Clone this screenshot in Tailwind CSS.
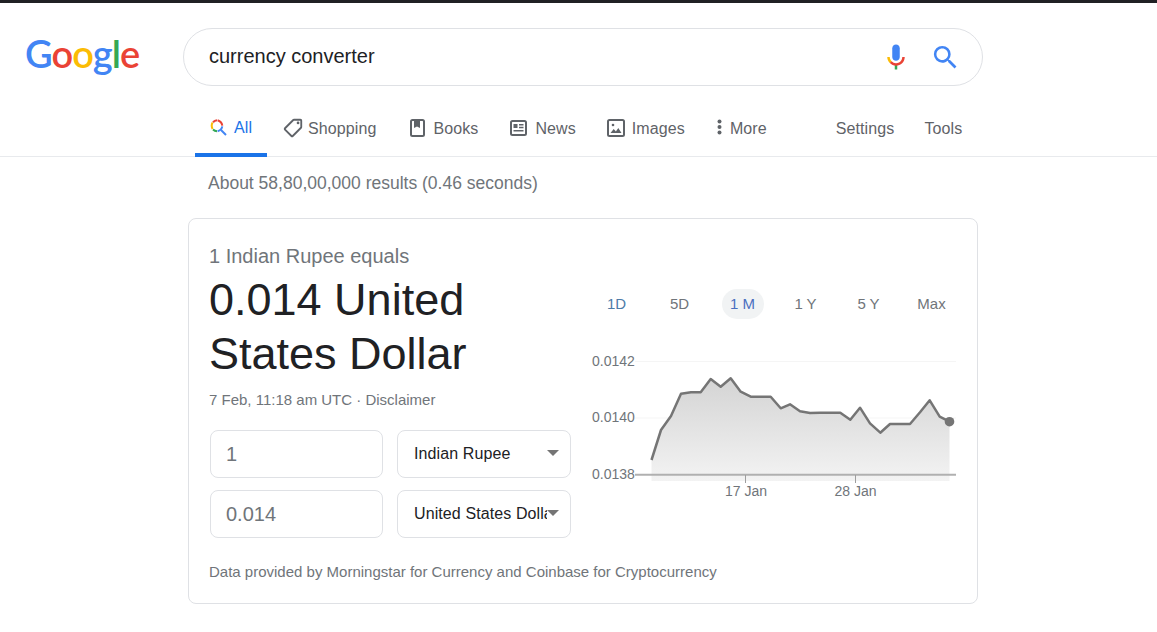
<!DOCTYPE html>
<html lang="en">
<head>
    <meta charset="UTF-8">
    <title>currency converter - Google Search</title>
    <script src="https://cdn.jsdelivr.net/npm/@tailwindcss/browser@4"></script>
</head>
<body class="bg-white font-['Liberation_Sans',Arial,sans-serif] overflow-hidden">
<div class="h-[632px] w-[1157px] overflow-hidden">

    <!-- Top edge -->
    <div class="h-[3px] bg-[#202124]"></div>

    <!-- Search header -->
    <header class="flex items-start h-[99px] pt-[25px]">
        <div class="w-[183px] pl-[25px] text-[38px] leading-[50px] tracking-[-1px] font-semibold font-['Lato',sans-serif]">
            <span class="text-[#4285f4]">G</span><span class="text-[#ea4335]">o</span><span class="text-[#fbbc05]">o</span><span class="text-[#4285f4]">g</span><span class="text-[#34a853]">l</span><span class="text-[#ea4335]">e</span>
        </div>
        <div class="flex items-center w-[800px] h-[58px] rounded-full border border-[#dfe1e5] pl-[25px] pr-[21px]">
            <div class="flex-1 pb-[2px] text-[20px] text-[#202124]">currency converter</div>
            <svg class="w-[30px] h-[30px] mr-[19px]" viewBox="0 0 24 24">
                <path fill="#4285f4" d="m12 15c1.66 0 3-1.31 3-2.97v-7.02c0-1.66-1.34-3.01-3-3.01s-3 1.34-3 3.01v7.02c0 1.66 1.34 2.97 3 2.97z"/>
                <path fill="#34a853" d="m11 18.08h2v3.92h-2z"/>
                <path fill="#fbbc05" d="m7.05 16.87c-1.27-1.33-2.05-2.83-2.05-4.87h2c0 1.45 0.56 2.42 1.47 3.38v0.32l-1.15 1.18z"/>
                <path fill="#ea4335" d="m12 16.93a4.97 5.25 0 0 1 -3.54 -1.55l-1.41 1.49c1.26 1.34 3.02 2.13 4.95 2.13 3.87 0 6.99-2.92 6.99-6.99h-1.99c0 2.92-2.24 4.92-4.99 4.92z"/>
            </svg>
            <svg class="w-[31px] h-[31px]" viewBox="0 0 24 24">
                <path fill="#4285f4" d="M15.5 14h-.79l-.28-.27A6.471 6.471 0 0 0 16 9.5 6.5 6.5 0 1 0 9.5 16c1.61 0 3.09-.59 4.23-1.57l.27.28v.79l5 4.99L20.49 19l-4.99-5zm-6 0C7.01 14 5 11.99 5 9.5S7.01 5 9.5 5 14 7.01 14 9.5 11.99 14 9.5 14z"/>
            </svg>
        </div>
    </header>

    <!-- Tabs -->
    <nav class="flex items-stretch h-[55px] pl-[195px] border-b border-[#e8eaed] text-[16px] tracking-[0.1px] text-[#5f6368]">
        <div class="flex items-center w-[72px] pl-[15px] border-b-4 border-[#1a73e8] text-[#1a73e8] h-[55px]">
            <svg class="w-[17px] h-[17px] mr-[7px]" viewBox="0 0 17 17" fill="none" stroke-width="2">
                <path stroke="#ea4335" d="M3 3.2A6.5 6.5 0 0 1 7 1.2"/>
                <path stroke="#fbbc05" d="M2.6 3.6A6.5 6.5 0 0 0 2.6 10"/>
                <path stroke="#34a853" d="M3 10.6A6.5 6.5 0 0 0 7 12.3"/>
                <path stroke="#4285f4" d="M7.6 12.3A6.5 6.5 0 0 0 12.3 7.4"/>
                <path stroke="#ea4335" d="M7.6 1.2A6.5 6.5 0 0 1 12.3 6.6"/>
                <path stroke="#4285f4" d="M11 11l5 5"/>
            </svg>
            <span>All</span>
        </div>
        <div class="flex items-center ml-[15px]">
            <svg class="w-[22px] h-[22px] mr-[4px] mb-[2px]" viewBox="0 0 24 24" fill="#5f6368">
                <g transform="matrix(-1 0 0 1 24 0)">
                    <path d="M21.41 11.58l-9-9C12.05 2.22 11.55 2 11 2H4c-1.1 0-2 .9-2 2v7c0 .55.22 1.05.59 1.42l9 9c.36.36.86.58 1.41.58s1.05-.22 1.41-.59l7-7c.37-.36.59-.86.59-1.41s-.23-1.06-.59-1.42zM13 20.01L4 11V4h7v-.01l9 9-7 7.02z"/>
                    <circle cx="6.5" cy="6.5" r="1.5"/>
                </g>
            </svg>
            <span>Shopping</span>
        </div>
        <div class="flex items-center ml-[34px]">
            <svg class="w-[15px] h-[18px] mr-[8px] mb-[2px]" viewBox="0 0 15 18" fill="none">
                <rect x="1" y="1" width="13" height="16" rx="1.5" stroke="#5f6368" stroke-width="2"/>
                <path fill="#5f6368" d="M4 1h6v8L7 7.5 4 9z"/>
            </svg>
            <span>Books</span>
        </div>
        <div class="flex items-center ml-[32px]">
            <svg class="w-[17px] h-[16px] mr-[8px] mb-[2px]" viewBox="0 0 17 16" fill="none">
                <rect x="1" y="1" width="15" height="14" rx="1.5" stroke="#5f6368" stroke-width="2"/>
                <path fill="#5f6368" d="M3.5 4h4v4h-4zM9 4h4.500v1.500H9zM9 6.700h4.500v1.500H9zM3.500 10h10v1.500h-10z"/>
            </svg>
            <span>News</span>
        </div>
        <div class="flex items-center ml-[31px]">
            <svg class="w-[18px] h-[18px] mr-[7px] mb-[2px]" viewBox="0 0 18 18" fill="none">
                <rect x="1" y="1" width="16" height="16" rx="1.500" stroke="#5f6368" stroke-width="2"/>
                <circle cx="6" cy="6" r="1.300" fill="#5f6368"/>
                <path fill="#5f6368" d="M3.500 14l3.200-4 2.200 2.500 2.400-3.500 3.200 5z"/>
            </svg>
            <span>Images</span>
        </div>
        <div class="flex items-center ml-[32px]">
            <svg class="w-[5px] h-[16px] mr-[8px] mb-[4px]" viewBox="0 0 5 16" fill="#5f6368">
                <circle cx="2.500" cy="2.500" r="2"/>
                <circle cx="2.500" cy="8" r="2"/>
                <circle cx="2.500" cy="13.500" r="2"/>
            </svg>
            <span>More</span>
        </div>
        <div class="flex items-center ml-[69px]">Settings</div>
        <div class="flex items-center ml-[30px]">Tools</div>
    </nav>

    <!-- Result count -->
    <div class="pl-[208px] pt-[16px] h-[61px] text-[17.5px] leading-[20px] text-[#70757a]">About 58,80,00,000 results (0.46 seconds)</div>

    <!-- Converter card -->
    <section class="flex ml-[188px] w-[790px] h-[386px] rounded-lg border border-[#dfe1e5]">
        <div class="w-[390px] pl-[20px] pt-[25px] shrink-0">
            <div class="text-[20px] leading-[24px] text-[#70757a]">1 Indian Rupee equals</div>
            <div class="mt-[5px] text-[45px] leading-[54px] text-[#202124]">0.014 United<br>States Dollar</div>
            <div class="mt-[10px] text-[15px] leading-[18px] text-[#70757a]">7 Feb, 11:18 am UTC · Disclaimer</div>
            <div class="mt-[21px] grid grid-cols-[173px_174px] gap-x-[14px] gap-y-[12px] pl-[1px]">
                <div class="flex items-center h-[48px] pl-[15px] rounded-lg border border-[#dfe1e5] text-[20px] text-[#70757a]">1</div>
                <div class="relative flex items-center h-[48px] pl-[16px] rounded-lg border border-[#dfe1e5] text-[16px] tracking-[0.1px] text-[#202124]">
                    <span class="w-[133px] overflow-hidden whitespace-nowrap">Indian Rupee</span>
                    <span class="absolute right-[11px] top-[19px] w-0 h-0 border-x-[6.500px] border-x-transparent border-t-[6px] border-t-[#757575]"></span>
                </div>
                <div class="flex items-center h-[48px] pl-[15px] rounded-lg border border-[#dfe1e5] text-[20px] text-[#70757a]">0.014</div>
                <div class="relative flex items-center h-[48px] pl-[16px] rounded-lg border border-[#dfe1e5] text-[16px] tracking-[0.1px] text-[#202124]">
                    <span class="w-[133px] overflow-hidden whitespace-nowrap">United States Dollar</span>
                    <span class="absolute right-[11px] top-[19px] w-0 h-0 border-x-[6.500px] border-x-transparent border-t-[6px] border-t-[#757575]"></span>
                </div>
            </div>
            <div class="mt-[25px] text-[15px] leading-[18px] text-[#70757a] whitespace-nowrap">Data provided by Morningstar for Currency and Coinbase for Cryptocurrency</div>
        </div>

        <!-- Chart side -->
        <div class="flex-1 pt-[70px] pl-[6px]">
            <div class="flex w-[378px] text-[15px] text-[#70757a]">
                <div class="flex-1 flex justify-center"><span class="px-[10px] h-[30px] leading-[30px] text-[#4d7ba8]">1D</span></div>
                <div class="flex-1 flex justify-center"><span class="px-[10px] h-[30px] leading-[30px]">5D</span></div>
                <div class="flex-1 flex justify-center"><span class="w-[42px] text-center h-[30px] leading-[30px] rounded-full bg-[#f1f3f4] text-[#4a6fc0]">1 M</span></div>
                <div class="flex-1 flex justify-center"><span class="px-[10px] h-[30px] leading-[30px]">1 Y</span></div>
                <div class="flex-1 flex justify-center"><span class="px-[10px] h-[30px] leading-[30px]">5 Y</span></div>
                <div class="flex-1 flex justify-center"><span class="px-[10px] h-[30px] leading-[30px]">Max</span></div>
            </div>
            <svg class="block mt-[31px] ml-[5px] w-[376px] h-[150px] font-['Liberation_Sans',Arial,sans-serif]" viewBox="590 350 376 150">
                <defs>
                    <linearGradient id="area" x1="0" y1="0" x2="0" y2="1">
                        <stop offset="0" stop-color="#d4d4d4"/>
                        <stop offset="1" stop-color="#f3f3f3"/>
                    </linearGradient>
                </defs>
                <path d="M635 361.500H956M635 418H956" stroke="#f5f5f5" stroke-width="1"/>
                <path fill="url(#area)" d="M651.500 460L661 430L671 416L681 393.700L691 392.300L700.700 392.300L710.700 379L720.700 386.700L730.700 378.300L740.700 391.700L750.700 396.700L760.700 396.700L770.700 396.700L780.700 408.300L790 404.300L800 411.300L810 413L820 412.700L830 412.700L840.300 412.700L850.300 419.700L860 407.700L870 423.300L880.300 432.700L890 424L900 424L910 424L920 412.300L929.700 400.300L939.700 416.700L949.500 421.700V481H651.500Z"/>
                <path fill="none" stroke="#757575" stroke-width="2.500" stroke-linejoin="round" d="M651.500 460L661 430L671 416L681 393.700L691 392.300L700.700 392.300L710.700 379L720.700 386.700L730.700 378.300L740.700 391.700L750.700 396.700L760.700 396.700L770.700 396.700L780.700 408.300L790 404.300L800 411.300L810 413L820 412.700L830 412.700L840.300 412.700L850.300 419.700L860 407.700L870 423.300L880.300 432.700L890 424L900 424L910 424L920 412.300L929.700 400.300L939.700 416.700L949.500 421.700"/>
                <circle cx="949.500" cy="421.700" r="4.800" fill="#757575"/>
                <path d="M635 474.800H956" stroke="#b0b0b0" stroke-width="2"/>
                <path d="M745.500 475V483M855.500 475V483" stroke="#9e9e9e" stroke-width="1"/>
                <g font-size="14" fill="#70757a">
                    <text x="592" y="366">0.0142</text>
                    <text x="592" y="422">0.0140</text>
                    <text x="592" y="479">0.0138</text>
                    <text x="746" y="496" text-anchor="middle">17 Jan</text>
                    <text x="855.500" y="496" text-anchor="middle">28 Jan</text>
                </g>
            </svg>
        </div>
    </section>
</div>
</body>
</html>
